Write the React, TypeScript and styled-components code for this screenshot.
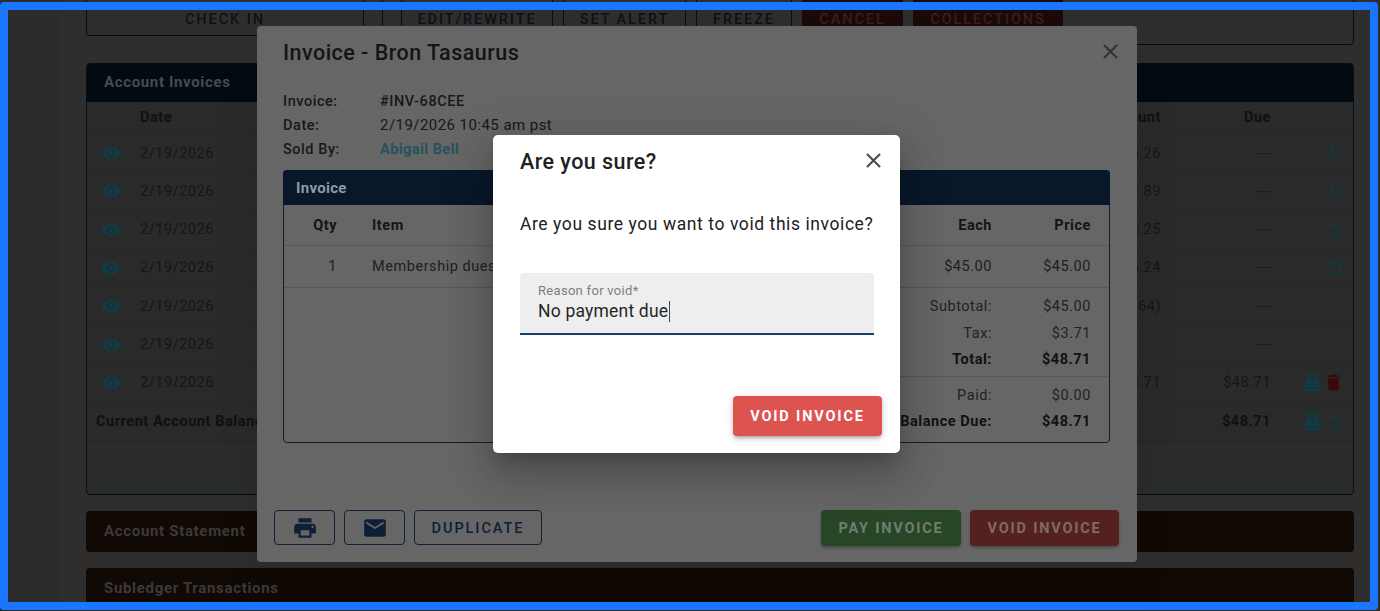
import React from 'react'
import styled, { createGlobalStyle } from 'styled-components'
import { MdClose, MdDelete, MdEmail, MdPointOfSale, MdPrint, MdReplay, MdVisibility } from 'react-icons/md'

const GlobalStyle = createGlobalStyle`
  html, body {
    margin: 0;
    height: 100%;
    background: #2b2b2b;
    font-family: Roboto, "Liberation Sans", sans-serif;
    overflow: hidden;
  }
`

const Screen = styled.div`
  position: relative;
  display: flex;
  width: 1380px;
  height: 611px;
  overflow: hidden;
`

const FocusFrame = styled.div`
  position: absolute;
  left: 0;
  top: 2px;
  width: 1378px;
  height: 608px;
  box-sizing: border-box;
  border: 8px solid #1a76ff;
  border-radius: 4px;
  z-index: 30;
`

const SideStrip = styled.div`
  width: 60px;
  flex: none;
  background: #2c2c2c;
`

const Main = styled.div`
  flex: 1;
  background: #2e2e2e;
  padding: 0 26px 0 26px;
  display: flex;
  flex-direction: column;
`

const TopRow = styled.div`
  display: flex;
  align-items: flex-start;
  gap: 18px;
  margin-bottom: 18px;
  height: 45px;
  flex: none;
`

const CheckIn = styled.div`
  width: 278px;
  height: 36px;
  flex: none;
  box-sizing: border-box;
  border: 1px solid #050e17;
  border-top: 0;
  border-radius: 0 0 4px 4px;
  padding-top: 12px;
  text-align: center;
  font-size: 14.5px;
  line-height: 16px;
  font-weight: 500;
  letter-spacing: 1.95px;
  color: #0a1219;
`

const ActionCard = styled.div`
  flex: 1;
  height: 45px;
  box-sizing: border-box;
  border: 1px solid #050e17;
  border-top: 0;
  border-radius: 0 0 4px 4px;
  padding-left: 18px;
  display: flex;
  gap: 10px;
`

const ActionButton = styled.div<{ $width: number; $danger?: boolean }>`
  width: ${p => p.$width}px;
  height: 36px;
  box-sizing: border-box;
  padding-top: 12px;
  text-align: center;
  font-size: 14.5px;
  line-height: 16px;
  font-weight: 500;
  letter-spacing: 1.9px;
  background: ${p => (p.$danger ? '#1c0a0a' : 'transparent')};
  color: ${p => (p.$danger ? '#352020' : '#0a1219')};
  border-left: ${p => (p.$danger ? '0' : '1px solid #050e17')};
  border-right: ${p => (p.$danger ? '0' : '1px solid #050e17')};
`

const Panel = styled.section`
  height: 432px;
  flex: none;
  box-sizing: border-box;
  border: 1px solid #050e17;
  border-radius: 4px;
  background: #2a2c2b;
  margin-bottom: 16px;
  overflow: hidden;
`

const PanelHeader = styled.div`
  height: 39px;
  margin: -1px -1px 0;
  padding: 0 18px 2px;
  box-sizing: border-box;
  display: flex;
  align-items: center;
  background: #020a12;
  color: #484b4e;
  font-size: 15px;
  font-weight: 700;
  letter-spacing: 0.65px;
`

const LedgerRow = styled.div<{ $head?: boolean; $summary?: boolean }>`
  display: grid;
  grid-template-columns: 53px 1fr 90px 110px 82px;
  align-items: center;
  height: ${p => (p.$head ? '32.4px' : '38.3px')};
  box-sizing: border-box;
  background: #2a2a2a;
  border-bottom: 1px solid #262626;
  color: ${p => (p.$head || p.$summary ? '#101010' : '#161616')};
  font-size: 14.5px;
  font-weight: ${p => (p.$head || p.$summary ? 700 : 400)};
  letter-spacing: 0.55px;
`

const EyeCell = styled.div`
  display: flex;
  padding-left: 14px;
  color: #0c3d4a;
`

const SummaryLabel = styled.div`
  grid-column: 1 / 3;
  padding-left: 9px;
`

const Money = styled.div`
  text-align: right;
`

const IconCell = styled.div`
  display: flex;
  justify-content: flex-end;
  padding-right: 9px;
`

const TealIcon = styled.span`
  display: flex;
  color: #0c3d4a;
`

const MutedIcon = styled.span`
  display: flex;
  color: #0e3a40;
`

const RedIcon = styled.span`
  display: flex;
  color: #380909;
`

const Collapsed = styled.div<{ $height: number }>`
  height: ${p => p.$height}px;
  flex: none;
  box-sizing: border-box;
  margin-bottom: 16px;
  padding: 0 18px 2px;
  display: flex;
  align-items: center;
  border-radius: 4px;
  background: #100904;
  color: #3c3a38;
  font-size: 15px;
  font-weight: 700;
  letter-spacing: 0.68px;
`

const InvoiceDialog = styled.div`
  position: absolute;
  left: 257px;
  top: 26px;
  width: 880px;
  height: 536px;
  box-sizing: border-box;
  padding: 0 18px 16px 17px;
  display: flex;
  flex-direction: column;
  background: #666;
  border-radius: 4px;
  box-shadow: 0 24px 38px 3px rgba(0, 0, 0, 0.08);
  color: #181818;
  z-index: 10;
`

const DialogTop = styled.div`
  height: 52px;
  padding: 0 0 0 9px;
  display: flex;
  align-items: center;
  justify-content: space-between;
  font-size: 21.5px;
  font-weight: 500;
  letter-spacing: 0.47px;
  color: #141414;
`

const CloseButton = styled.div<{ $color: string }>`
  display: flex;
  margin-right: -4px;
  margin-top: -1px;
  color: ${p => p.$color};
`

const MetaList = styled.div`
  margin: 11px 0 9px 9px;
  display: grid;
  grid-template-columns: 97px 1fr;
  grid-auto-rows: 24px;
  align-items: center;
  font-size: 15px;
  letter-spacing: 0.45px;
`

const MetaLabel = styled.div`
  font-size: 14.5px;
  font-weight: 500;
  letter-spacing: 0.55px;
`

const MetaLink = styled.div`
  font-weight: 700;
  font-size: 14.5px;
  color: #24525e;
`

const InvoicePanel = styled.section`
  margin: 0 9px;
  height: 273px;
  box-sizing: border-box;
  border: 1px solid #0c2138;
  border-radius: 4px;
`

const InvoiceHeader = styled.div`
  height: 35px;
  margin: -1px -1px 0;
  padding: 0 13px;
  display: flex;
  align-items: center;
  border-radius: 4px 4px 0 0;
  background: #08182a;
  color: #8f9aa6;
  font-size: 15px;
  font-weight: 700;
  letter-spacing: 0.3px;
`

const LineRow = styled.div<{ $head?: boolean }>`
  display: grid;
  grid-template-columns: 53px 1fr 100px 99px;
  align-items: center;
  height: ${p => (p.$head ? '41px' : '42px')};
  box-sizing: border-box;
  padding-right: 18px;
  border-bottom: 1px solid #575757;
  font-size: 14.5px;
  font-weight: ${p => (p.$head ? 700 : 400)};
  letter-spacing: 0.55px;
  color: ${p => (p.$head ? '#141414' : '#1e1e1e')};
`

const ItemCell = styled.div`
  padding-left: 35px;
`

const SummaryBlock = styled.div`
  padding: 5.5px 18px 0 0;
`

const SummaryRow = styled.div<{ $strong?: boolean }>`
  display: grid;
  grid-template-columns: 1fr 99px;
  align-items: center;
  height: 26.5px;
  font-size: 14.5px;
  font-weight: ${p => (p.$strong ? 700 : 400)};
  letter-spacing: 0.55px;
  color: ${p => (p.$strong ? '#111' : '#222')};
  text-align: right;
`

const SummaryRule = styled.div`
  height: 1px;
  margin: 3px -18px 5px 560px;
  background: #575757;
`

const DialogFooter = styled.div`
  margin-top: auto;
  display: flex;
  gap: 9px;
`

const OutlineButton = styled.div<{ $width: number }>`
  width: ${p => p.$width}px;
  height: 35px;
  margin-bottom: 1px;
  box-sizing: border-box;
  padding-top: 1px;
  display: flex;
  align-items: center;
  justify-content: center;
  border: 1px solid #0d2239;
  border-radius: 4px;
  color: #0e2036;
  font-size: 14.5px;
  font-weight: 500;
  letter-spacing: 1.95px;
`

const FooterSpacer = styled.div`
  flex: 1;
`

const SolidButton = styled.div<{ $width: number; $bg: string; $fg: string }>`
  width: ${p => p.$width}px;
  height: 36px;
  display: flex;
  align-items: center;
  justify-content: center;
  border-radius: 4px;
  background: ${p => p.$bg};
  color: ${p => p.$fg};
  font-size: 14.5px;
  font-weight: 700;
  letter-spacing: 1.8px;
  box-shadow: 0 2px 3px rgba(0, 0, 0, 0.25);
`

const ConfirmDialog = styled.div`
  position: absolute;
  left: 493px;
  top: 135px;
  width: 407px;
  height: 318px;
  box-sizing: border-box;
  padding: 0 18px 17px 27px;
  display: flex;
  flex-direction: column;
  background: #fff;
  border-radius: 5px;
  box-shadow: 0 11px 15px -7px rgba(0, 0, 0, 0.2), 0 24px 38px 3px rgba(0, 0, 0, 0.14), 0 9px 46px 8px rgba(0, 0, 0, 0.12);
  z-index: 20;
`

const ConfirmTop = styled.div`
  height: 52px;
  display: flex;
  align-items: center;
  justify-content: space-between;
  font-size: 21.5px;
  font-weight: 500;
  letter-spacing: 0.45px;
  color: #212121;
`

const ConfirmText = styled.p`
  margin: 25px 0 0;
  font-size: 17.5px;
  line-height: 24px;
  letter-spacing: 0.58px;
  color: #212121;
  white-space: nowrap;
`

const FilledField = styled.div`
  margin-top: 37px;
  width: 354px;
  height: 62px;
  box-sizing: border-box;
  padding: 10px 18px 0;
  background: #eeeeee;
  border-bottom: 2px solid #1a3f6f;
  border-radius: 4px 4px 0 0;
`

const FieldLabel = styled.div`
  font-size: 13px;
  line-height: 16px;
  letter-spacing: 0.3px;
  color: #7f7f7f;
`

const FieldValue = styled.div`
  margin-top: 2px;
  display: flex;
  font-size: 17.5px;
  line-height: 21px;
  letter-spacing: 0.2px;
  color: #262626;
`

const Caret = styled.span`
  width: 1px;
  height: 21px;
  margin-left: 1px;
  background: #444;
`

const ConfirmActions = styled.div`
  margin-top: auto;
  display: flex;
  justify-content: flex-end;
`

const VoidButton = styled.div`
  width: 149px;
  height: 40px;
  display: flex;
  align-items: center;
  justify-content: center;
  border-radius: 4px;
  background: #dc5350;
  color: #fff;
  font-size: 14.5px;
  font-weight: 700;
  letter-spacing: 1.85px;
  box-shadow: 0 3px 3px -2px rgba(0, 0, 0, 0.2), 0 3px 4px rgba(0, 0, 0, 0.14), 0 1px 8px rgba(0, 0, 0, 0.12);
`

type Ledger = { amount: string; due: string; action: 'undo' | 'pay' | 'none' }

const ledger: Ledger[] = [
  { amount: '$45.26', due: '---', action: 'undo' },
  { amount: '$47.89', due: '---', action: 'undo' },
  { amount: '$48.25', due: '---', action: 'undo' },
  { amount: '$46.24', due: '---', action: 'undo' },
  { amount: '($3.64)', due: '---', action: 'none' },
  { amount: '', due: '---', action: 'none' },
  { amount: '$48.71', due: '$48.71', action: 'pay' },
]

function RowActions({ action }: { action: Ledger['action'] }) {
  if (action === 'undo') {
    return (
      <IconCell>
        <MutedIcon><MdReplay size={21} /></MutedIcon>
      </IconCell>
    )
  }
  if (action === 'pay') {
    return (
      <IconCell>
        <TealIcon><MdPointOfSale size={21} /></TealIcon>
        <RedIcon><MdDelete size={21} /></RedIcon>
      </IconCell>
    )
  }
  return <IconCell />
}

export default function App() {
  return (
    <Screen>
      <GlobalStyle />
      <SideStrip />
      <Main>
        <TopRow>
          <CheckIn>CHECK IN</CheckIn>
          <ActionCard>
            <ActionButton $width={152}>EDIT/REWRITE</ActionButton>
            <ActionButton $width={123}>SET ALERT</ActionButton>
            <ActionButton $width={96}>FREEZE</ActionButton>
            <ActionButton $width={101} $danger>CANCEL</ActionButton>
            <ActionButton $width={150} $danger>COLLECTIONS</ActionButton>
          </ActionCard>
        </TopRow>

        <Panel>
          <PanelHeader>Account Invoices</PanelHeader>
          <LedgerRow $head>
            <div />
            <div>Date</div>
            <Money>Amount</Money>
            <Money>Due</Money>
            <div />
          </LedgerRow>
          {ledger.map((row, i) => (
            <LedgerRow key={i}>
              <EyeCell><MdVisibility size={20} /></EyeCell>
              <div>2/19/2026</div>
              <Money>{row.amount}</Money>
              <Money>{row.due}</Money>
              <RowActions action={row.action} />
            </LedgerRow>
          ))}
          <LedgerRow $summary>
            <SummaryLabel>Current Account Balance</SummaryLabel>
            <div />
            <Money>$48.71</Money>
            <IconCell>
              <TealIcon><MdPointOfSale size={21} /></TealIcon>
              <MutedIcon><MdReplay size={21} /></MutedIcon>
            </IconCell>
          </LedgerRow>
        </Panel>

        <Collapsed $height={41}>Account Statement</Collapsed>
        <Collapsed $height={41}>Subledger Transactions</Collapsed>
      </Main>

      <InvoiceDialog>
        <DialogTop>
          Invoice - Bron Tasaurus
          <CloseButton $color="#333"><MdClose size={25} /></CloseButton>
        </DialogTop>
        <MetaList>
          <MetaLabel>Invoice:</MetaLabel>
          <MetaLabel>#INV-68CEE</MetaLabel>
          <MetaLabel>Date:</MetaLabel>
          <div>2/19/2026 10:45 am pst</div>
          <MetaLabel>Sold By:</MetaLabel>
          <MetaLink>Abigail Bell</MetaLink>
        </MetaList>
        <InvoicePanel>
          <InvoiceHeader>Invoice</InvoiceHeader>
          <LineRow $head>
            <Money>Qty</Money>
            <ItemCell>Item</ItemCell>
            <Money>Each</Money>
            <Money>Price</Money>
          </LineRow>
          <LineRow>
            <Money>1</Money>
            <ItemCell>Membership dues</ItemCell>
            <Money>$45.00</Money>
            <Money>$45.00</Money>
          </LineRow>
          <SummaryBlock>
            <SummaryRow><div>Subtotal:</div><div>$45.00</div></SummaryRow>
            <SummaryRow><div>Tax:</div><div>$3.71</div></SummaryRow>
            <SummaryRow $strong><div>Total:</div><div>$48.71</div></SummaryRow>
            <SummaryRule />
            <SummaryRow><div>Paid:</div><div>$0.00</div></SummaryRow>
            <SummaryRow $strong><div>Balance Due:</div><div>$48.71</div></SummaryRow>
          </SummaryBlock>
        </InvoicePanel>
        <DialogFooter>
          <OutlineButton $width={61}><MdPrint size={26} /></OutlineButton>
          <OutlineButton $width={61}><MdEmail size={26} /></OutlineButton>
          <OutlineButton $width={128}>DUPLICATE</OutlineButton>
          <FooterSpacer />
          <SolidButton $width={140} $bg="#264625" $fg="#6f7e70">PAY INVOICE</SolidButton>
          <SolidButton $width={149} $bg="#552120" $fg="#7e6a6a">VOID INVOICE</SolidButton>
        </DialogFooter>
      </InvoiceDialog>

      <ConfirmDialog>
        <ConfirmTop>
          Are you sure?
          <CloseButton $color="#4a4a4a"><MdClose size={25} /></CloseButton>
        </ConfirmTop>
        <ConfirmText>Are you sure you want to void this invoice?</ConfirmText>
        <FilledField>
          <FieldLabel>Reason for void*</FieldLabel>
          <FieldValue>No payment due<Caret /></FieldValue>
        </FilledField>
        <ConfirmActions>
          <VoidButton>VOID INVOICE</VoidButton>
        </ConfirmActions>
      </ConfirmDialog>

      <FocusFrame />
    </Screen>
  )
}
